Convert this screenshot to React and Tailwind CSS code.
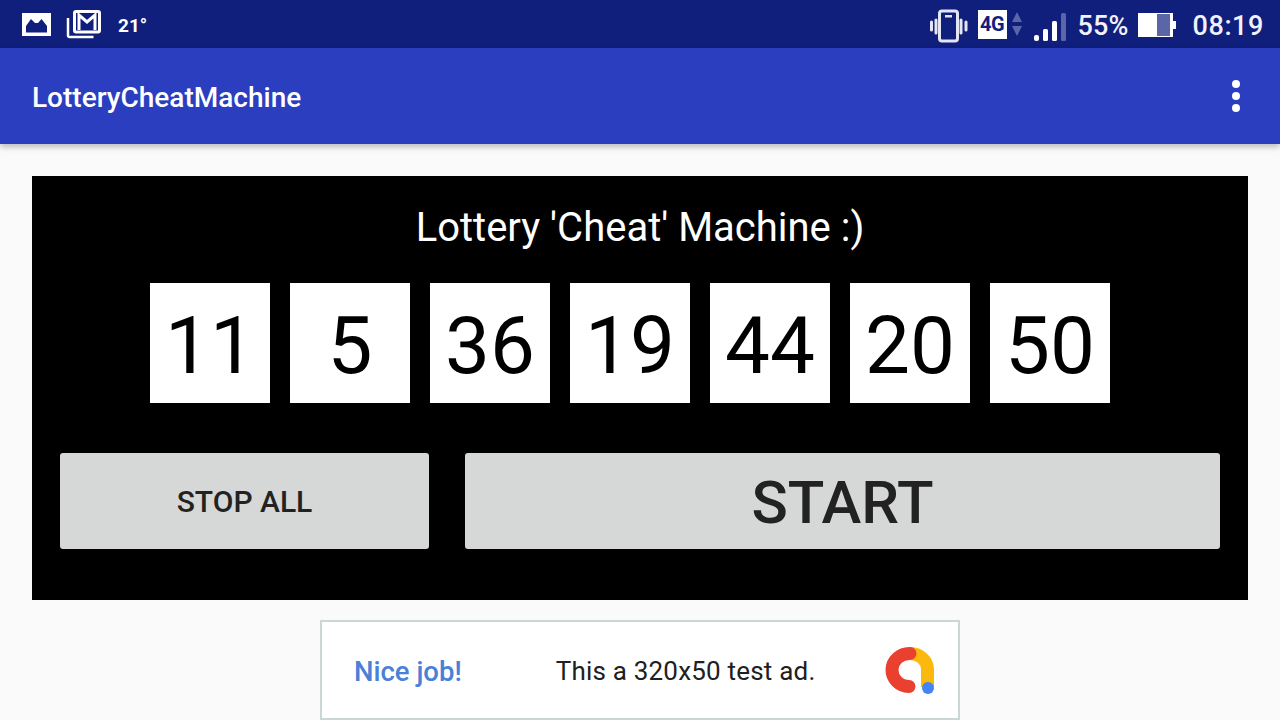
const NUMBERS = [11, 5, 36, 19, 44, 20, 50];

function StatusBar() {
  return (
    <div className="h-12 bg-[#101e7c] flex items-center text-white shrink-0">
      <svg width="29" height="23" viewBox="0 0 29 23" className="ml-[22px]">
        <path fillRule="evenodd" fill="#fff" d="M0 0h29v23H0zM4 19.500h21V13l-5.500-7-3.500 4h-3L9 6l-5 7z" />
      </svg>
      <svg width="36" height="30" viewBox="0 0 36 30" className="ml-[15px]">
        <path fill="none" stroke="#fff" strokeWidth="2.500" d="M2 9v17.500a1.500 1.500 0 0 0 1.500 1.500h24" />
        <rect x="8.500" y="2.500" width="25" height="20.500" rx="1.500" fill="none" stroke="#fff" strokeWidth="3" />
        <path fill="none" stroke="#fff" strokeWidth="3" d="M13 21V6l8 7 8-7v15" />
      </svg>
      <span className="ml-[16px] mt-1 text-[19px] font-bold font-['Roboto',sans-serif]">21°</span>
      <div className="ml-auto flex items-center">
        <svg width="38" height="34" viewBox="0 0 38 34" className="mt-[3px]">
          <rect x="9.500" y="2" width="18" height="30" rx="2.500" fill="none" stroke="#e4e6f3" strokeWidth="3" />
          <rect x="15" y="6" width="7" height="2.500" fill="#e4e6f3" />
          <path stroke="#e4e6f3" strokeWidth="3" strokeLinecap="round" d="M6 11v13M1.500 13v8M31 11v13M36 13v8" />
        </svg>
        <div className="ml-[10px] w-[29px] h-[29px] bg-white text-[#101e7c] text-[20px] font-bold flex items-center justify-center tracking-[-0.5px] font-['Roboto',sans-serif]">4G</div>
        <svg width="10" height="24" viewBox="0 0 10 24" className="ml-[5px]">
          <path fill="#5a66a8" d="M5 0l5 10H0zM0 14h10l-5 10z" />
        </svg>
        <svg width="32" height="30" viewBox="0 0 32 30" className="ml-[12px] mt-1">
          <rect x="0" y="24" width="5" height="6" rx="2" fill="#fff" />
          <rect x="9" y="18" width="5" height="12" rx="1.500" fill="#fff" />
          <rect x="18" y="10" width="5" height="20" rx="1.500" fill="#fff" />
          <rect x="27" y="2" width="5" height="28" rx="1.500" fill="#5a66a8" />
        </svg>
        <span className="ml-[12px] mt-1 text-[27px] font-medium tracking-[0.1px] text-[#f1f2fa] font-['Roboto',sans-serif]">55%</span>
        <svg width="38" height="24" viewBox="0 0 38 24" className="ml-[10px] mt-[2px]">
          <rect x="0" y="0" width="35" height="24" fill="#fff" />
          <rect x="19" y="1" width="13" height="22" fill="#5a66a8" />
          <rect x="35" y="8" width="3" height="8" fill="#fff" />
        </svg>
        <span className="ml-[16px] mr-[16px] mt-1 text-[27px] font-medium tracking-[0.6px] text-[#f1f2fa] font-['Roboto',sans-serif]">08:19</span>
      </div>
    </div>
  );
}

function AppBar() {
  return (
    <div className="h-24 bg-[#2a3ebf] flex items-center justify-between pl-8 pr-10 text-white shadow-[0_3px_6px_rgba(0,0,0,0.25)] relative shrink-0">
      <span className="pt-1 text-[28px] font-medium font-['Roboto',sans-serif]">LotteryCheatMachine</span>
      <div className="flex flex-col gap-1">
        <div className="w-2 h-2 rounded-full bg-white" />
        <div className="w-2 h-2 rounded-full bg-white" />
        <div className="w-2 h-2 rounded-full bg-white" />
      </div>
    </div>
  );
}

function AdBanner() {
  return (
    <div className="mt-5 mx-auto w-[640px] h-[100px] shrink-0 bg-white border-2 border-[#cbd6d6] flex items-center pl-8 pr-6 font-['Roboto',sans-serif]">
      <span className="mt-[3px] text-[27.500px] font-medium text-[#4a80d8]">Nice job!</span>
      <span className="ml-[94px] mt-[3px] text-[26px] tracking-[0.2px] text-[#202020]">This a 320x50 test ad.</span>
      <svg width="50" height="50" viewBox="0 0 50 50" className="ml-auto">
        <path d="M26 8.500 A 17.500 16 0 0 1 43.500 24 V 42" fill="none" stroke="#fbb90d" strokeWidth="13" />
        <path d="M26 8.500 A 17.500 16.500 0 0 0 25 41.500" fill="none" stroke="#e9402f" strokeWidth="13" strokeLinecap="round" />
        <circle cx="44" cy="43" r="6" fill="#4285f4" />
      </svg>
    </div>
  );
}

export default function App() {
  return (
    <div className="w-[1280px] h-[720px] overflow-hidden flex flex-col bg-[#fafafa] font-['Roboto',sans-serif]">
      <StatusBar />
      <AppBar />
      <div className="mt-8 mx-8 h-[424px] bg-black shrink-0 flex flex-col">
        <div className="mt-[26px] text-center text-white text-[40px] leading-[52px]">Lottery 'Cheat' Machine :)</div>
        <div className="mt-[29px] flex justify-center gap-5 pr-5">
          {NUMBERS.map((n, i) => (
            <div key={i} className="w-[120px] h-[120px] pt-1.5 bg-white flex items-center justify-center text-black text-[80px]">{n}</div>
          ))}
        </div>
        <div className="mt-[50px] px-7 flex gap-9">
          <button className="w-[369px] h-24 bg-[#d6d7d7] rounded-[3px] text-[#222] text-[30px] font-medium">STOP ALL</button>
          <button className="flex-1 h-24 pt-1 bg-[#d6d7d7] rounded-[3px] text-[#222] text-[60px] font-medium">START</button>
        </div>
      </div>
      <AdBanner />
    </div>
  );
}
